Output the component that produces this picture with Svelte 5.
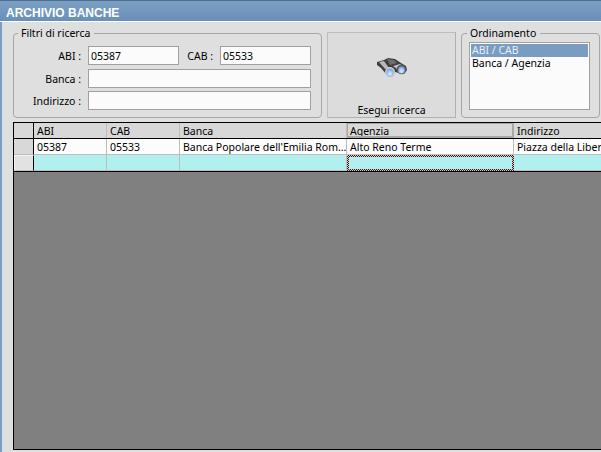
<script lang="ts">
  const columns = [
    { name: 'ABI', width: 73, value: '05387' },
    { name: 'CAB', width: 73, value: '05533' },
    { name: 'Banca', width: 167, value: "Banca Popolare dell'Emilia Rom…" },
    { name: 'Agenzia', width: 167, value: 'Alto Reno Terme' },
    { name: 'Indirizzo', width: 100, value: 'Piazza della Libertà' }
  ];
</script>

<div class="window">
  <div class="titlebar">ARCHIVIO BANCHE</div>
  <div class="body">
    <div class="top">
      <fieldset class="filters">
        <legend>Filtri di ricerca</legend>
        <div class="row first">
          <label class="lbl" for="abi">ABI :</label>
          <input id="abi" class="short" value="05387" />
          <label class="lbl cab" for="cab">CAB :</label>
          <input id="cab" class="short" value="05533" />
        </div>
        <div class="row">
          <label class="lbl" for="banca">Banca :</label>
          <input id="banca" class="long" />
        </div>
        <div class="row">
          <label class="lbl" for="ind">Indirizzo :</label>
          <input id="ind" class="long" />
        </div>
      </fieldset>

      <button class="search">
        <svg class="binoculars" width="30" height="20" viewBox="0 0 30 20" aria-hidden="true">
          <defs>
            <radialGradient id="lens" cx="0.5" cy="0.65" r="0.6">
              <stop offset="0" stop-color="#e4f1ff" />
              <stop offset="1" stop-color="#6ea4e4" />
            </radialGradient>
          </defs>
          <path d="M0 4 L7 2 L11 0 L18 1 L24 5 L29 8 L30 12 L27 16 L22 15 L18 14 L16 18 L12 19 L9 16 L4 10 L0 7 Z" fill="#3f3f3f" />
          <path d="M2 4 L7 3 L12 10 L8 11 Z" fill="#b8b8b8" />
          <path d="M10 1 L17 2 L20 5 L13 7 Z" fill="#6e6e6e" />
          <path d="M16 8 L23 6 L27 9 L20 11 Z" fill="#c4c4c4" />
          <circle cx="13" cy="14" r="5" fill="#cfcfcf" />
          <ellipse cx="13" cy="14.5" rx="3.6" ry="4" fill="url(#lens)" />
          <circle cx="24.5" cy="11.5" r="4.8" fill="#5a5a5a" />
          <ellipse cx="24.5" cy="12" rx="3.3" ry="3.6" fill="url(#lens)" />
        </svg>
        <span>Esegui ricerca</span>
      </button>

      <fieldset class="sort">
        <legend>Ordinamento</legend>
        <div class="listbox">
          <div class="opt selected">ABI / CAB</div>
          <div class="opt">Banca / Agenzia</div>
        </div>
      </fieldset>
    </div>

    <div class="grid">
      <div class="gridrow head">
        <div class="gutter"></div>
        {#each columns as c, i}
          <div class="cell" class:active={i === 3} style="width: {c.width}px">{c.name}</div>
        {/each}
      </div>
      <div class="gridrow data">
        <div class="gutter"></div>
        {#each columns as c}
          <div class="cell" style="width: {c.width}px">{c.value}</div>
        {/each}
      </div>
      <div class="gridrow new">
        <div class="gutter current"></div>
        {#each columns as c, i}
          <div class="cell" class:focus={i === 3} style="width: {c.width}px"></div>
        {/each}
      </div>
    </div>
  </div>
</div>

<style>
  :global(body) {
    margin: 0;
    overflow: hidden;
  }

  .window {
    width: 601px;
    height: 452px;
    display: flex;
    flex-direction: column;
    background: #dfdfdf;
    font-family: "Noto Sans", "DejaVu Sans", sans-serif;
    font-size: 10.5px;
    color: #000;
    overflow: hidden;
  }

  .titlebar {
    height: 20px;
    padding-left: 6px;
    border-top: 1px solid #4d6f93;
    flex-shrink: 0;
    line-height: 25px;
    font-family: "Liberation Sans", sans-serif;
    font-size: 12px;
    font-weight: bold;
    color: #fff;
    background: linear-gradient(#7c9ec3, #6a90b8);
    border-bottom: 1px solid #fff;
  }

  .body {
    flex: 1;
    min-height: 0;
    display: flex;
    flex-direction: column;
    padding: 5px 0 2px 11px;
    border-left: 2px solid #7d9dbf;
    box-shadow: inset 1px 0 #cfe0ef;
  }

  .top {
    display: flex;
    height: 95px;
    flex-shrink: 0;
  }

  fieldset {
    margin: 0;
    padding: 0;
    border: 1px solid #a6a6a6;
    border-radius: 4px;
    min-width: 0;
    box-sizing: border-box;
    height: 91px;
  }

  legend {
    margin-left: 4px;
    padding: 1px 4px 0 3px;
    line-height: 11px;
    font-size: 10.5px;
  }

  .filters {
    width: 309px;
    padding-top: 7px;
  }

  .row {
    display: flex;
    align-items: center;
    height: 19px;
    margin-bottom: 3px;
  }

  .row.first {
    margin-bottom: 4px;
  }

  .lbl {
    width: 67px;
    text-align: right;
    flex-shrink: 0;
    margin-right: 7px;
  }

  .lbl.cab {
    width: 34px;
    margin-right: 7px;
  }

  input {
    box-sizing: border-box;
    height: 19px;
    padding: 1px 2px 0;
    margin: 0;
    border: 1px solid #a0a0a0;
    background: #fbfbfb;
    font: inherit;
    color: #000;
    outline: none;
  }

  .short {
    width: 91px;
  }

  .long {
    width: 223px;
  }

  .search {
    width: 129px;
    height: 86px;
    margin: 5px 0 0 5px;
    padding: 0;
    display: flex;
    flex-direction: column;
    align-items: center;
    background: #dcdcdc;
    border: 1px solid #bdbdbd;
    border-right-color: #b0b0b0;
    border-bottom-color: #b0b0b0;
    font: inherit;
    color: #000;
  }

  .binoculars {
    margin-top: 25px;
  }

  .search span {
    margin-top: auto;
  }

  .sort {
    width: 139px;
    margin-left: 5px;
    padding: 3px 0 0 7px;
  }

  .sort legend {
    margin-left: -2px;
  }

  .listbox {
    box-sizing: border-box;
    width: 121px;
    height: 68px;
    border: 1px solid #a0a0a0;
    background: #fbfbfb;
    padding: 1px;
  }

  .opt {
    height: 13px;
    line-height: 13px;
    padding-left: 1px;
  }

  .selected {
    background: #7a9cc0;
    color: #e6eef7;
  }

  .grid {
    flex: 1;
    min-height: 0;
    background: #808080;
    border: 1px solid #000;
    border-right: 0;
    overflow: hidden;
  }

  .gridrow {
    display: flex;
    height: 16px;
    width: 700px;
  }

  .gutter {
    box-sizing: border-box;
    width: 20px;
    flex-shrink: 0;
    background: #d8d8d8;
    border-right: 1px solid #000;
    border-bottom: 1px solid #bdbdbd;
  }

  .cell {
    box-sizing: border-box;
    flex-shrink: 0;
    padding: 1px 0 0 3px;
    line-height: 15px;
    white-space: nowrap;
    overflow: hidden;
    border-right: 1px solid #bdbdbd;
    border-bottom: 1px solid #bdbdbd;
  }

  .head {
    border-bottom: 1px solid #000;
    background: #d8d8d8;
    height: 15px;
  }

  .head .gutter,
  .head .cell {
    border-bottom: 0;
  }

  .head .active {
    border: 1px solid #a8a8a8;
    border-right-width: 2px;
    border-bottom: 2px solid #a8a8a8;
    padding: 0 0 0 2px;
    line-height: 14px;
  }

  .data .cell {
    background: #fcfcfc;
  }

  .new {
    border-bottom: 1px solid #000;
    background: #b2efef;
  }

  .current {
    background: #e2e2e2;
    border: 1px solid #c4c4c4;
    border-top-color: #f4f4f4;
    border-left-color: #f4f4f4;
    border-right: 1px solid #000;
  }

  .focus {
    border: 2px solid transparent;
    background:
      linear-gradient(#b2efef, #b2efef) padding-box,
      repeating-conic-gradient(#2a1a1a 0 25%, #e8c8c8 0 50%) 0 0 / 2px 2px border-box;
  }
</style>
